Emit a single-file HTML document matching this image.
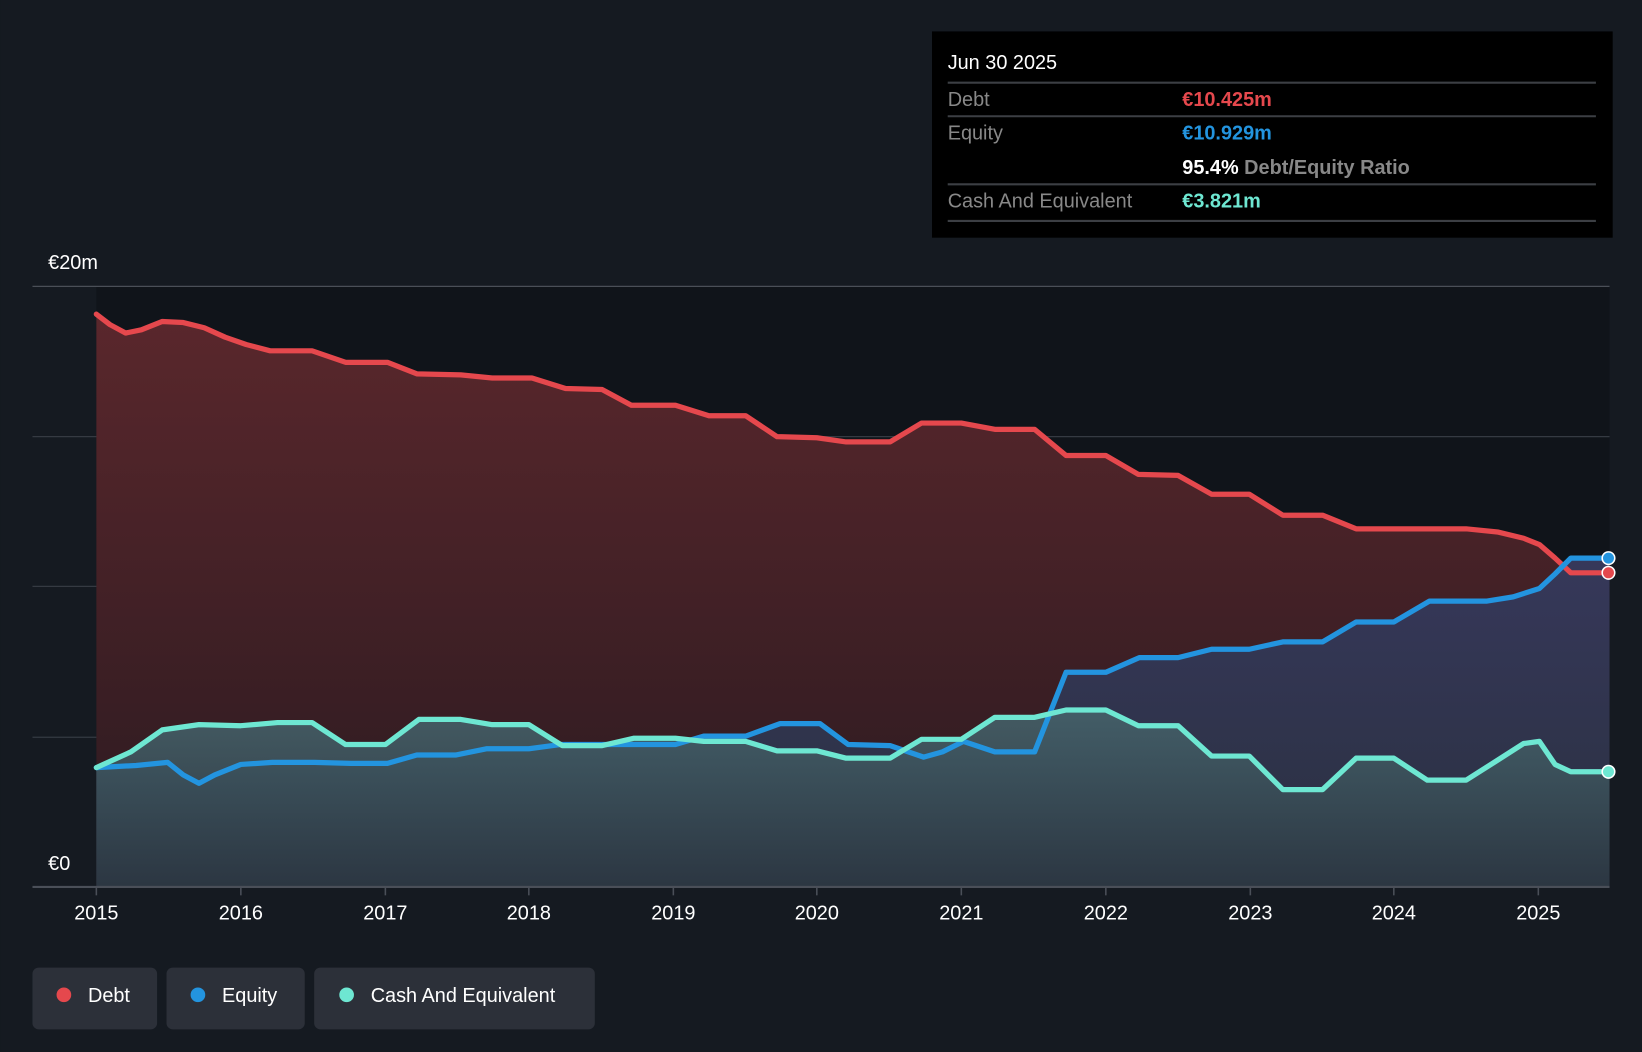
<!DOCTYPE html>
<html><head><meta charset="utf-8"><style>
html,body{margin:0;padding:0;background:#151a21;}
svg{display:block;font-family:"Liberation Sans",Roboto,Arial,sans-serif;}
</style></head><body>
<svg width="1642" height="1052" viewBox="0 0 1568 1004.6" xmlns="http://www.w3.org/2000/svg">
<defs>
<linearGradient id="gd" x1="0" y1="0" x2="0" y2="1"><stop offset="0" stop-color="#5a272c"/><stop offset="1" stop-color="#2a1a20"/></linearGradient>
<linearGradient id="ge" x1="0" y1="0" x2="0" y2="1"><stop offset="0" stop-color="#36385a"/><stop offset="1" stop-color="#2a3040"/></linearGradient>
<linearGradient id="gc" x1="0" y1="0" x2="0" y2="1"><stop offset="0" stop-color="#45626a"/><stop offset="1" stop-color="#2c3742"/></linearGradient>
</defs>
<rect width="1568" height="1005" fill="#151a21"/>
<rect x="92" y="273" width="1445" height="574" fill="#10141a"/>
<g stroke="#353a42" stroke-width="1.2">
<line x1="31" y1="273.5" x2="1537" y2="273.5" stroke="#4a4f57"/>
<line x1="31" y1="417" x2="1537" y2="417"/>
<line x1="31" y1="560" x2="1537" y2="560"/>
<line x1="31" y1="704" x2="1537" y2="704"/>
</g>
<path fill="url(#gd)" d="M92,300 L105,310 L120,318 L135,315 L155,307 L175,308 L195,313 L215,322 L235,329 L258,335 L298,335 L330,346 L370,346 L398,357 L440,358 L470,361 L508,361 L540,371 L575,372 L603,387 L645,387 L677,397 L712,397 L742,417 L780,418 L808,422 L850,422 L880,404 L918,404 L950,410 L988,410 L1018,435 L1056,435 L1087,453 L1125,454 L1157,472 L1193,472 L1225,492 L1263,492 L1295,505 L1400,505 L1430,508 L1455,514 L1470,520 L1485,533 L1500,547 L1537,547 L1537,847 L92,847 Z"/>
<path fill="url(#ge)" d="M92,733 L130,731 L160,728 L175,740 L190,748 L205,740 L230,730 L260,728 L300,728 L335,729 L370,729 L398,721 L435,721 L465,715 L505,715 L535,711 L600,711 L645,711 L672,703 L712,703 L745,691 L783,691 L810,711 L850,712 L882,723 L900,718 L920,708 L950,718 L988,718 L1018,642 L1056,642 L1088,628 L1125,628 L1157,620 L1193,620 L1225,613 L1263,613 L1295,594 L1331,594 L1365,574 L1420,574 L1445,570 L1470,562 L1485,548 L1500,533 L1537,533 L1537,847 L92,847 Z"/>
<path fill="url(#gc)" opacity="0.9" d="M92,733 L125,718 L155,697 L190,692 L230,693 L265,690 L298,690 L330,711 L368,711 L400,687 L440,687 L470,692 L505,692 L537,712 L575,712 L605,705 L645,705 L672,708 L712,708 L742,717 L780,717 L808,724 L850,724 L880,706 L918,706 L950,685 L988,685 L1018,678 L1056,678 L1087,693 L1125,693 L1157,722 L1193,722 L1225,754 L1263,754 L1295,724 L1331,724 L1363,745 L1400,745 L1430,726 L1455,710 L1470,708 L1485,730 L1500,737 L1537,737 L1537,847 L92,847 Z"/>
<g fill="none" stroke-width="5" stroke-linejoin="round" stroke-linecap="round">
<path stroke="#e5484d" d="M92,300 L105,310 L120,318 L135,315 L155,307 L175,308 L195,313 L215,322 L235,329 L258,335 L298,335 L330,346 L370,346 L398,357 L440,358 L470,361 L508,361 L540,371 L575,372 L603,387 L645,387 L677,397 L712,397 L742,417 L780,418 L808,422 L850,422 L880,404 L918,404 L950,410 L988,410 L1018,435 L1056,435 L1087,453 L1125,454 L1157,472 L1193,472 L1225,492 L1263,492 L1295,505 L1400,505 L1430,508 L1455,514 L1470,520 L1485,533 L1500,547 L1537,547"/>
<path stroke="#2394df" d="M92,733 L130,731 L160,728 L175,740 L190,748 L205,740 L230,730 L260,728 L300,728 L335,729 L370,729 L398,721 L435,721 L465,715 L505,715 L535,711 L600,711 L645,711 L672,703 L712,703 L745,691 L783,691 L810,711 L850,712 L882,723 L900,718 L920,708 L950,718 L988,718 L1018,642 L1056,642 L1088,628 L1125,628 L1157,620 L1193,620 L1225,613 L1263,613 L1295,594 L1331,594 L1365,574 L1420,574 L1445,570 L1470,562 L1485,548 L1500,533 L1537,533"/>
<path stroke="#6ee7d2" d="M92,733 L125,718 L155,697 L190,692 L230,693 L265,690 L298,690 L330,711 L368,711 L400,687 L440,687 L470,692 L505,692 L537,712 L575,712 L605,705 L645,705 L672,708 L712,708 L742,717 L780,717 L808,724 L850,724 L880,706 L918,706 L950,685 L988,685 L1018,678 L1056,678 L1087,693 L1125,693 L1157,722 L1193,722 L1225,754 L1263,754 L1295,724 L1331,724 L1363,745 L1400,745 L1430,726 L1455,710 L1470,708 L1485,730 L1500,737 L1537,737"/>
</g>
<circle cx="1536" cy="533" r="6" fill="#2394df" stroke="#fff" stroke-width="1.5"/>
<circle cx="1536" cy="547" r="6" fill="#e5484d" stroke="#fff" stroke-width="1.5"/>
<circle cx="1536" cy="737" r="6" fill="#6ee7d2" stroke="#fff" stroke-width="1.5"/>
<line x1="31" y1="847" x2="1537" y2="847" stroke="#4a4f58" stroke-width="2"/>
<g stroke="#4a4f58" stroke-width="1.5">
<line x1="92" y1="847" x2="92" y2="855"/><line x1="230" y1="847" x2="230" y2="855"/><line x1="368" y1="847" x2="368" y2="855"/><line x1="505" y1="847" x2="505" y2="855"/><line x1="643" y1="847" x2="643" y2="855"/><line x1="780" y1="847" x2="780" y2="855"/><line x1="918" y1="847" x2="918" y2="855"/><line x1="1056" y1="847" x2="1056" y2="855"/><line x1="1194" y1="847" x2="1194" y2="855"/><line x1="1331" y1="847" x2="1331" y2="855"/><line x1="1469" y1="847" x2="1469" y2="855"/>
</g>
<g fill="#fff" font-size="19" text-anchor="middle">
<text x="92" y="878">2015</text><text x="230" y="878">2016</text><text x="368" y="878">2017</text><text x="505" y="878">2018</text><text x="643" y="878">2019</text><text x="780" y="878">2020</text><text x="918" y="878">2021</text><text x="1056" y="878">2022</text><text x="1194" y="878">2023</text><text x="1331" y="878">2024</text><text x="1469" y="878">2025</text>
</g>
<text x="46" y="257" fill="#fff" font-size="19">€20m</text>
<text x="46" y="831" fill="#fff" font-size="19">€0</text>
<rect x="890" y="30" width="650" height="197" fill="#000"/>
<text x="905" y="66" fill="#fff" font-size="19">Jun 30 2025</text>
<g stroke="#3c3f44" stroke-width="2">
<line x1="905" y1="79" x2="1524" y2="79"/><line x1="905" y1="111" x2="1524" y2="111"/><line x1="905" y1="176" x2="1524" y2="176"/><line x1="905" y1="211" x2="1524" y2="211"/>
</g>
<g font-size="19">
<text x="905" y="101" fill="#888">Debt</text><text x="1129" y="101" fill="#e5484d" font-weight="bold">€10.425m</text>
<text x="905" y="133" fill="#888">Equity</text><text x="1129" y="133" fill="#2394df" font-weight="bold">€10.929m</text>
<text x="1129" y="166" fill="#fff" font-weight="bold">95.4% <tspan fill="#888" font-weight="bold">Debt/Equity Ratio</tspan></text>
<text x="905" y="198" fill="#888">Cash And Equivalent</text><text x="1129" y="198" fill="#6ee7d2" font-weight="bold">€3.821m</text>
</g>
<rect x="31" y="924" width="119" height="59" rx="6" fill="#2c3039"/>
<rect x="159" y="924" width="132" height="59" rx="6" fill="#2c3039"/>
<rect x="300" y="924" width="268" height="59" rx="6" fill="#2c3039"/>
<circle cx="61" cy="950" r="7" fill="#e5484d"/>
<circle cx="189" cy="950" r="7" fill="#2394df"/>
<circle cx="331" cy="950" r="7" fill="#6ee7d2"/>
<g fill="#fff" font-size="19">
<text x="84" y="957">Debt</text><text x="212" y="957">Equity</text><text x="354" y="957">Cash And Equivalent</text>
</g>
</svg>
</body></html>
